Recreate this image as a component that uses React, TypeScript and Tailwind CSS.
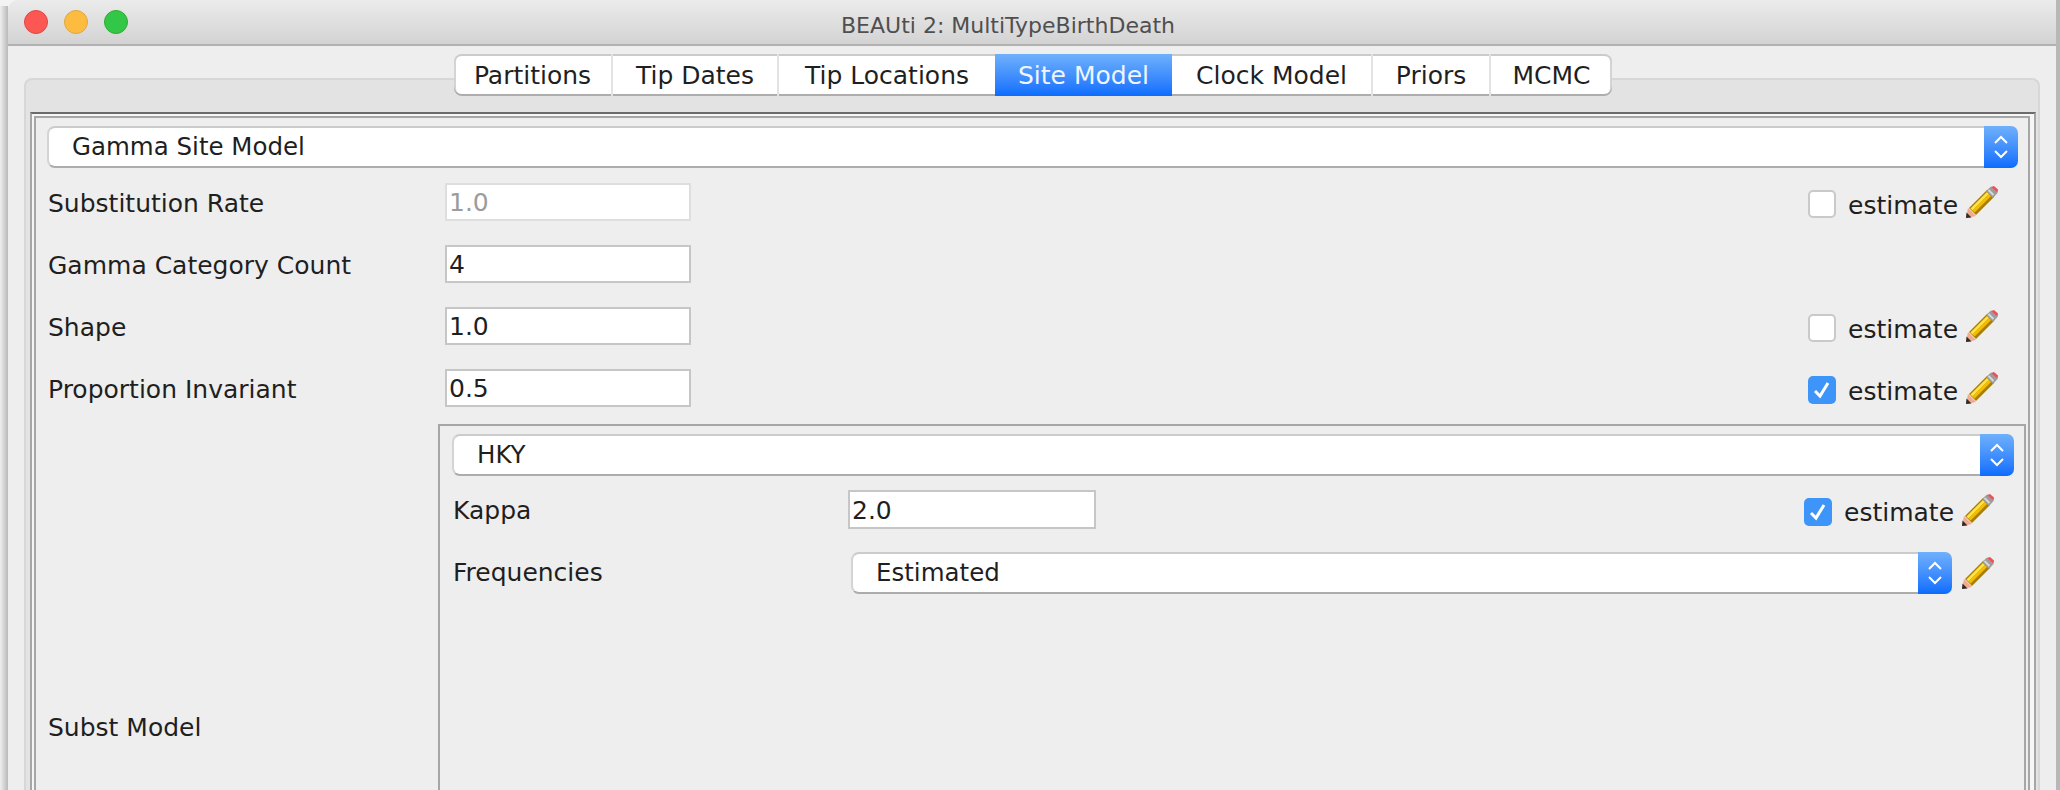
import { ReactNode } from 'react'

const tabs = [
  { label: 'Partitions', width: 'w-[159px]' },
  { label: 'Tip Dates', width: 'w-[166px]' },
  { label: 'Tip Locations', width: 'w-[216px]' },
  { label: 'Site Model', width: 'w-[177px]', active: true },
  { label: 'Clock Model', width: 'w-[201px]' },
  { label: 'Priors', width: 'w-[118px]' },
  { label: 'MCMC', width: 'w-[121px]' },
]

function Pencil() {
  return (
    <svg width="32" height="32" viewBox="0 0 32 32" className="shrink-0">
      <polygon points="0,32 2,22 10,30" fill="#f2a98c" />
      <polygon points="0,32 0.5,26.5 5.5,31.5" fill="#2e2a26" />
      <polygon points="3,22 21,4 28,11 10,29" fill="#a87f00" />
      <line x1="5.5" y1="23.5" x2="22" y2="7" stroke="#ffe24a" strokeWidth="3" />
      <line x1="7.5" y1="25.5" x2="24" y2="9" stroke="#f5bd00" strokeWidth="3" />
      <polygon points="20,5 25,0.5 31.5,7 27,12" fill="#9c9c9c" />
      <line x1="22.5" y1="4" x2="27.5" y2="9" stroke="#d8d8d8" strokeWidth="2" />
      <polygon points="25,1 28,0 32,3.5 31.5,7" fill="#e8535a" />
    </svg>
  )
}

function Combo({ label, className = '' }: { label: string; className?: string }) {
  return (
    <div className={`flex h-[42px] items-stretch ${className}`}>
      <div className="flex min-w-0 flex-1 items-center rounded-l-[8px] border-y-2 border-l-2 border-t-[#cbcbcb] border-b-[#acacac] border-l-[#d4d4d4] bg-white pl-[23px] text-[24.5px]">
        {label}
      </div>
      <div className="flex w-[34px] items-center justify-center rounded-r-[7px] bg-gradient-to-b from-[#6fb0fb] to-[#0a6cfe]">
        <svg width="16" height="26" viewBox="0 0 16 26" fill="none" stroke="white" strokeWidth="2">
          <path d="M2 9 L8 3 L14 9" />
          <path d="M2 17 L8 23 L14 17" />
        </svg>
      </div>
    </div>
  )
}

function Field({ value, disabled, className = '' }: { value: string; disabled?: boolean; className?: string }) {
  return (
    <div
      className={`flex h-[38px] w-[246px] items-center border-2 bg-white pl-[2px] pt-[2px] ${
        disabled ? 'border-[#dedede] text-[#9c9c9c]' : 'border-[#c6c6c6]'
      } ${className}`}
    >
      {value}
    </div>
  )
}

function Estimate({ checked }: { checked?: boolean }) {
  return (
    <div className="flex items-center">
      {checked ? (
        <div className="mt-[4px] flex h-[28px] w-[28px] items-center justify-center rounded-[5px] bg-[#3d94f9]">
          <svg width="20" height="20" viewBox="0 0 20 20" fill="none" stroke="white" strokeWidth="3">
            <path d="M3 11 L8 16 L16 3" />
          </svg>
        </div>
      ) : (
        <div className="mt-[4px] h-[28px] w-[28px] rounded-[5px] border-2 border-[#c9c9c9] bg-white" />
      )}
      <span className="ml-[12px] mt-[7px] w-[108px] whitespace-nowrap">estimate</span>
      <span className="ml-[10px] flex">
        <Pencil />
      </span>
    </div>
  )
}

function Row({ label, value, disabled, estimate, checked, mt = 'mt-[24px]' }: {
  label: string
  value: string
  disabled?: boolean
  estimate?: boolean
  checked?: boolean
  mt?: string
}) {
  return (
    <div className={`flex h-[38px] items-center pl-[1px] pr-[20px] ${mt}`}>
      <div className="w-[397px] pt-[3px]">{label}</div>
      <Field value={value} disabled={disabled} />
      <div className="flex-1" />
      {estimate && <Estimate checked={checked} />}
    </div>
  )
}

function Frame({ children }: { children: ReactNode }) {
  return (
    <div className="border-x-2 border-t-2 border-x-[#a6a6a6] border-t-[#6b6b6b] bg-[#f6f6f6] pl-[2px] pr-[4px] pt-[2px]">
      <div className="border-x-2 border-t-2 border-[#a6a6a6] bg-[#eeeeee] pl-[11px] pr-[10px] pt-[8px]">
        {children}
      </div>
    </div>
  )
}

export default function App() {
  return (
    <div className="flex h-[790px] w-[2060px] overflow-hidden bg-[#f3f3f3] font-['DejaVu_Sans',sans-serif] text-[25px] text-[#1f1f1f]">
      <div className="mt-[6px] w-[8px] shrink-0 bg-gradient-to-r from-[#efefef] to-[#b9b9b9]" />
      <div className="min-w-0 flex-1 rounded-tl-[10px] bg-[#eeeeee]">
        <div className="flex h-[46px] items-center rounded-tl-[10px] border-b-2 border-[#b1b1b1] bg-gradient-to-b from-[#ebebeb] to-[#d3d3d3] pl-[16px]">
          <div className="flex gap-[16px]">
            <div className="h-[24px] w-[24px] rounded-full border border-[#e2463f] bg-[#fc5753]" />
            <div className="h-[24px] w-[24px] rounded-full border border-[#e1a73e] bg-[#fdbc40]" />
            <div className="h-[24px] w-[24px] rounded-full border border-[#2dac2f] bg-[#33c748]" />
          </div>
          <div className="flex-1 pr-[168px] pt-[6px] text-center text-[22px] text-[#4f4f4f]">BEAUti 2: MultiTypeBirthDeath</div>
        </div>

        <div className="ml-[16px] mr-[16px] mt-[32px] rounded-t-[8px] border-x-2 border-t-2 border-[#d7d7d7] bg-[#e3e3e3] pl-[4px] pr-[2px]">
          <div className="-mt-[26px] flex justify-center">
            <div className="flex h-[42px] rounded-[8px] bg-white shadow-[inset_0_2px_0_#cbcbcb,inset_0_-2px_0_#adadad,inset_2px_0_0_#d4d4d4,inset_-2px_0_0_#d4d4d4]">
              {tabs.map((tab, i) =>
                tab.active ? (
                  <div
                    key={tab.label}
                    className={`flex items-center justify-center bg-gradient-to-b from-[#6fb0fb] to-[#0a6cfe] pt-[2px] text-[#eef5ff] ${tab.width}`}
                  >
                    {tab.label}
                  </div>
                ) : (
                  <div
                    key={tab.label}
                    className={`flex items-center justify-center pt-[2px] ${tab.width} ${
                      i < tabs.length - 1 && !tabs[i + 1].active ? 'border-r-2 border-[#e2e2e2]' : ''
                    }`}
                  >
                    {tab.label}
                  </div>
                ),
              )}
            </div>
          </div>

          <div className="mt-[16px]">
            <Frame>
              <Combo label="Gamma Site Model" />
              <Row label="Substitution Rate" value="1.0" disabled estimate mt="mt-[15px]" />
              <Row label="Gamma Category Count" value="4" />
              <Row label="Shape" value="1.0" estimate />
              <Row label="Proportion Invariant" value="0.5" estimate checked />

              <div className="-mr-[8px] mt-[17px] flex items-center pl-[1px]">
                <div className="w-[390px]">Subst Model</div>
                <div className="h-[608px] flex-1 border-2 border-[#a6a6a6] pl-[12px] pr-[10px] pt-[8px]">
                  <Combo label="HKY" />
                  <div className="mt-[14px] flex h-[39px] items-center pl-[1px] pr-[20px]">
                    <div className="w-[395px] pt-[2px]">Kappa</div>
                    <Field value="2.0" className="h-[39px] w-[248px]" />
                    <div className="flex-1" />
                    <Estimate checked />
                  </div>
                  <div className="mt-[23px] flex items-center pl-[1px]">
                    <div className="w-[398px]">Frequencies</div>
                    <Combo label="Estimated" className="flex-1" />
                    <div className="ml-[10px] mr-[20px] flex">
                      <Pencil />
                    </div>
                  </div>
                </div>
              </div>
            </Frame>
          </div>
        </div>
      </div>
      <div className="w-[4px] shrink-0 bg-[#b8b8b8]" />
    </div>
  )
}
